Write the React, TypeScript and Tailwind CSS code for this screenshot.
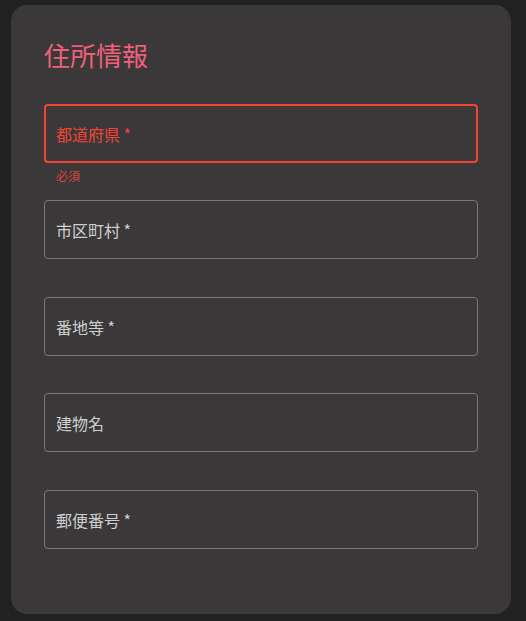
import React from 'react';

const FIELDS: { label: string; required: boolean; error?: string; h: string }[] = [
  { label: '都道府県', required: true, error: '必須', h: 'h-[96px]' },
  { label: '市区町村', required: true, h: 'h-[97px]' },
  { label: '番地等', required: true, h: 'h-[96px]' },
  { label: '建物名', required: false, h: 'h-[97px]' },
  { label: '郵便番号', required: true, h: 'h-[96px]' },
];

function Field({ label, required, error, h }: { label: string; required: boolean; error?: string; h: string }) {
  return (
    <div className={h}>
      <div
        className={`h-[59px] rounded-[4px] flex items-center ${
          error ? 'border-2 border-[#f44336] px-[10px]' : 'border border-[#7a7879] px-[11px]'
        }`}
      >
        <span className={`text-[16px] ${error ? 'text-[#f44336]' : 'text-[#cfcfcf]'}`}>
          {label}
          {required && ' *'}
        </span>
      </div>
      {error && <p className="mt-[5px] ml-[12px] text-[12px] leading-[16px] text-[#d9473d]">{error}</p>}
    </div>
  );
}

export default function App() {
  return (
    <div
      className="min-h-[621px] bg-[#212121] pt-[5px] pl-[11px]"
      style={{ fontFamily: '"Noto Sans CJK JP", "Noto Sans", sans-serif' }}
    >
      <div className="w-[500px] h-[609px] rounded-[16px] bg-[#3a3839] px-[33px] pt-[30px]">
        <h2 className="text-[26px] leading-[40px] font-normal text-[#f0607a] mb-[29px]">住所情報</h2>
        <div className="flex flex-col">
          {FIELDS.map((f) => (
            <Field key={f.label} {...f} />
          ))}
        </div>
      </div>
    </div>
  );
}
